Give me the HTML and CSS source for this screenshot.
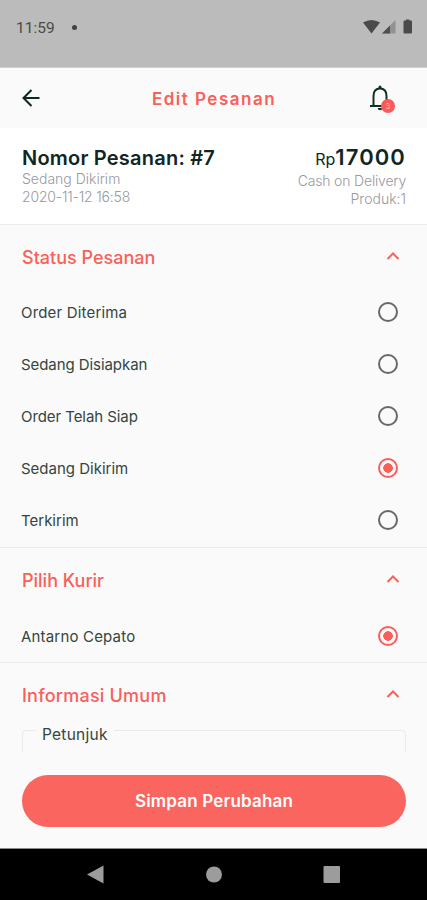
FILE: index.html
```html
<!DOCTYPE html>
<html lang="id">
<head>
<meta charset="utf-8">
<meta name="viewport" content="width=device-width, initial-scale=1">
<title>Edit Pesanan</title>
<link rel="stylesheet" href="styles.css">
</head>
<body>
<div class="screen">
  <div class="statusbar">
    <span class="clock">11:59</span><span class="dot"></span>
    <svg class="signals" width="52" height="16" viewBox="0 0 52 16">
      <path d="M1 3.6Q9.500-1.600 18 3.600L9.500 14.500Z" fill="#4a4a4a"/>
      <path d="M33.500 1V14.500H20Z" fill="#929292"/>
      <path d="M28 6.500V14.500H20Z" fill="#4f4f4f"/>
      <path d="M44 1.500V.500H47.500V1.500H49Q50 1.500 50 2.500V13.500Q50 14.500 49 14.500H42.500Q41.500 14.500 41.500 13.500V2.500Q41.500 1.500 42.500 1.500Z" fill="#4a4a4a"/>
    </svg>
  </div>
  <header class="appbar">
    <svg class="back" width="20" height="20" viewBox="0 0 20 20"><path d="M18.500 10H2.500M10.500 2L2.500 10L10.500 18" fill="none" stroke="#10261f" stroke-width="2"/></svg>
    <h1 class="title">Edit Pesanan</h1>
    <div class="bell">
      <svg width="26" height="28" viewBox="0 0 26 28"><path d="M6.500 21V12Q6.500 4.500 13 4.500Q19.500 4.500 19.500 12V21M3 22H23" fill="none" stroke="#10302a" stroke-width="2"/><path d="M11.500 4.500V3.200Q11.500 1.500 13 1.500T14.500 3.200V4.500ZM10.600 24H15.600Q15.300 26.300 13.100 26.300T10.600 24Z" fill="#10302a"/></svg>
      <span class="badge">3</span>
    </div>
  </header>
  <section class="summary">
    <div class="col">
      <div class="order">Nomor Pesanan: #7</div>
      <div class="meta">Sedang Dikirim</div>
      <div class="meta date">2020-11-12 16:58</div>
    </div>
    <div class="col right">
      <div class="price"><span class="currency">Rp</span>17000</div>
      <div class="meta cod">Cash on Delivery</div>
      <div class="meta">Produk:1</div>
    </div>
  </section>
  <main class="content">
    <section class="group">
      <h2 class="heading"><span>Status Pesanan</span><svg class="chevron" width="14" height="10" viewBox="0 0 14 10"><path d="M1.500 8L7 2.500L12.500 8" fill="none" stroke="#f9605a" stroke-width="2"/></svg></h2>
      <label class="option"><span class="wide">Order Diterima</span><i class="radio"></i></label>
      <label class="option"><span class="tight">Sedang Disiapkan</span><i class="radio"></i></label>
      <label class="option"><span class="tight">Order Telah Siap</span><i class="radio"></i></label>
      <label class="option"><span>Sedang Dikirim</span><i class="radio on"></i></label>
      <label class="option"><span>Terkirim</span><i class="radio"></i></label>
    </section>
    <section class="group courier">
      <h2 class="heading"><span>Pilih Kurir</span><svg class="chevron" width="14" height="10" viewBox="0 0 14 10"><path d="M1.500 8L7 2.500L12.500 8" fill="none" stroke="#f9605a" stroke-width="2"/></svg></h2>
      <label class="option"><span class="wide">Antarno Cepato</span><i class="radio on"></i></label>
    </section>
    <section class="group last">
      <h2 class="heading"><span class="wide">Informasi Umum</span><svg class="chevron" width="14" height="10" viewBox="0 0 14 10"><path d="M1.500 8L7 2.500L12.500 8" fill="none" stroke="#f9605a" stroke-width="2"/></svg></h2>
      <fieldset class="field"><legend>Petunjuk</legend></fieldset>
    </section>
  </main>
  <footer class="footer"><button class="save">Simpan Perubahan</button></footer>
  <nav class="navbar">
    <svg width="427" height="51" viewBox="0 0 427 51" fill="#9c9c9c"><path d="M87 25.500L103.500 16.500V34.500Z"/><circle cx="214" cy="25.500" r="8"/><rect x="323.500" y="17" width="16.500" height="17" rx="1"/></svg>
  </nav>
</div>
</body>
</html>
```
FILE: styles.css
```css
* { box-sizing: border-box; }
body { margin: 0; font-family: Inter, "Liberation Sans", sans-serif; color: #344540; background: #fafafa; }
.screen { width: 427px; height: 900px; display: flex; flex-direction: column; overflow: hidden; }
.statusbar { height: 68px; flex: none; background: #bbb; display: flex; align-items: flex-start; padding: 19px 13px 0 16px; border-bottom: 1px solid #d0d0d0; }
.clock { font: 15.500px/19px Roboto, sans-serif; color: #4a4a4a; }
.dot { width: 5px; height: 5px; border-radius: 50%; background: #414141; margin: 6px 0 0 17px; }
.signals { margin-left: auto; }
.appbar { height: 60px; flex: none; display: flex; align-items: center; padding: 0 30px 0 21px; background: #fafafa; }
.back { flex: none; }
.title { flex: 1; margin: 2px 0 0; padding-left: 20px; text-align: center; font-size: 17px; font-weight: 600; letter-spacing: 1.500px; color: #f9605a; }
.bell { position: relative; width: 30px; height: 28px; }
.badge { position: absolute; left: 14px; top: 15px; width: 14px; height: 14px; border-radius: 50%; background: #fd5956; color: #ffb9b4; font-size: 8px; line-height: 14px; text-align: center; }
.summary { height: 97px; flex: none; display: flex; justify-content: space-between; padding: 18px 21px 0 22px; background: #fff; border-bottom: 1px solid #ececec; }
.right { text-align: right; }
.order, .price { font-size: 20px; line-height: 24px; font-weight: 600; color: #10261f; letter-spacing: .220px; }
.price { font-size: 22px; letter-spacing: 1.100px; margin: -1px 0 1px; }
.currency { font-size: 16px; font-weight: 400; letter-spacing: 0; }
.meta { font-size: 14px; line-height: 18px; font-weight: 300; color: #9898a0; }
.date, .cod { letter-spacing: -.180px; }
.content { flex: 1; min-height: 0; overflow: hidden; }
.group { border-bottom: 1px solid #ebeded; }
.group.last { border: 0; }
.heading { display: flex; justify-content: space-between; align-items: center; height: 62px; margin: 0; padding: 2px 27px 0 22px; font-size: 18px; font-weight: 500; color: #f9605a; }
.heading .wide { letter-spacing: .220px; }
.chevron { margin-top: -2px; }
.option { display: flex; justify-content: space-between; align-items: center; height: 52px; padding: 0 29px 2px 21px; font-size: 15px; }
.courier .option { padding-bottom: 0; }
.option .wide { letter-spacing: .180px; }
.option .tight { letter-spacing: -.070px; }
.radio { width: 20px; height: 20px; border: 2px solid #686868; border-radius: 50%; }
.radio.on { border-color: #fc5d59; background: radial-gradient(circle, #fc5d59 4.500px, transparent 5px); }
.field { margin: -8px 21px 0 22px; padding: 0; height: 60px; border: 1px solid #e9eaea; border-radius: 4px; }
.field legend { margin-left: 13px; padding: 9px 6px 0; font-size: 15.500px; line-height: 18px; letter-spacing: .250px; }
.footer { height: 96px; flex: none; padding: 23px 21px 0 22px; background: #fafafa; }
.save { width: 100%; height: 52px; border: 0; border-radius: 26px; background: #fa665f; color: #fff; font: 600 17px Inter, sans-serif; letter-spacing: .180px; }
.navbar { height: 52px; flex: none; background: #000; border-top: 1px solid #8c8c8c; }
.navbar svg { display: block; }
```
